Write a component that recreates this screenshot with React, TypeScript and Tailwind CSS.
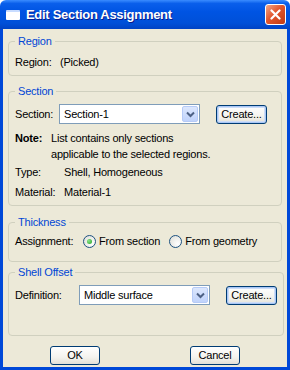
import React from "react";

const font = { fontFamily: '"Liberation Sans", Arial, sans-serif' };

function XpButton({ label, w, focus }: { label: string; w: number; focus?: boolean }) {
  return (
    <div
      className="h-[19px] rounded-[3px] border border-[#003C74] bg-[linear-gradient(#FFFFFF,#F4F3EE_60%,#E3E1D6)] flex items-center justify-center text-[11px] text-black"
      style={{ width: w, boxShadow: focus ? "inset 0 0 0 1px #A9C7F5, inset 0 0 0 2px #CEDDF7" : undefined }}
    >
      {label}
    </div>
  );
}

function Combo({ value, w }: { value: string; w: number }) {
  return (
    <div className="h-[20px] border border-[#7F9DB9] bg-white flex items-stretch" style={{ width: w }}>
      <div className="flex-1 flex items-center pl-[4px] text-[11px] text-black">{value}</div>
      <div className="m-[1px] w-[16px] rounded-[2px] border border-[#B6CBF7] bg-[linear-gradient(#DCE7FD,#C0D3FB)] flex items-center justify-center">
        <svg width="9" height="7" viewBox="0 0 9 7">
          <path d="M1 1.5 L4.5 5 L8 1.5" stroke="#4D6185" strokeWidth="2" fill="none" />
        </svg>
      </div>
    </div>
  );
}

function Radio({ checked }: { checked?: boolean }) {
  return (
    <div className="w-[13px] h-[13px] rounded-full border border-[#1C5180] bg-[radial-gradient(circle_at_70%_70%,#FFFFFF,#DCDCD4)] flex items-center justify-center">
      {checked && <div className="w-[5px] h-[5px] rounded-full bg-[radial-gradient(circle_at_35%_35%,#8BE58B,#21A121)]" />}
    </div>
  );
}

function Group({ title, children, cls }: { title: string; children: React.ReactNode; cls: string }) {
  return (
    <fieldset className={"mx-[5px] border border-[#D0D0BF] rounded-[4px] px-[6px] " + cls}>
      <legend className="px-[3px] text-[11px] text-[#0046D5] leading-[12px]">{title}</legend>
      {children}
    </fieldset>
  );
}

export default function App() {
  return (
    <div className="w-[290px] h-[370px] flex flex-col overflow-hidden" style={font}>
      <div className="h-[29px] bg-[linear-gradient(#3A8CFF_0%,#0A5FEB_12%,#0054E3_40%,#0050D8_80%,#0043C4_100%)] flex items-center pl-[6px] pr-[4px] rounded-t-[6px]">
        <div className="w-[14px] h-[10px] bg-white rounded-[1px] border-t-[2px] border-[#C8DCFF] mr-[6px] mt-[1px]" />
        <div className="text-white font-bold text-[13px] tracking-[-0.3px] flex-1 [text-shadow:1px_1px_#0A1E8C]">Edit Section Assignment</div>
        <div className="w-[21px] h-[21px] rounded-[3px] border border-white bg-[linear-gradient(135deg,#F0A88A,#E2562D_45%,#C03A12)] flex items-center justify-center">
          <svg width="11" height="11" viewBox="0 0 11 11">
            <path d="M1.5 1.5 L9.5 9.5 M9.5 1.5 L1.5 9.5" stroke="white" strokeWidth="2.2" strokeLinecap="round" />
          </svg>
        </div>
      </div>
      <div className="flex-1 bg-[#ECE9D8] border-x-[3px] border-b-[3px] border-[#0048D8] flex flex-col text-[11px] tracking-[-0.2px] text-black">
        <Group title="Region" cls="mt-[6px] pt-[8px] pb-[6px]">
          <div className="flex h-[14px] items-center">
            <span className="w-[45px]">Region:</span>
            <span>(Picked)</span>
          </div>
        </Group>
        <Group title="Section" cls="mt-[9px] pt-[7px] pb-[4px]">
          <div className="flex items-center">
            <span className="w-[44px]">Section:</span>
            <Combo value="Section-1" w={141} />
            <div className="ml-[16px]">
              <XpButton label="Create..." w={51} focus />
            </div>
          </div>
          <div className="flex mt-[6px] leading-[16px]">
            <span className="w-[36px] font-bold">Note:</span>
            <span>
              List contains only sections
              <br />
              applicable to the selected regions.
            </span>
          </div>
          <div className="flex mt-[1px] h-[18px] items-center">
            <span className="w-[49px]">Type:</span>
            <span>Shell, Homogeneous</span>
          </div>
          <div className="flex mt-[2px] h-[18px] items-center">
            <span className="w-[49px]">Material:</span>
            <span>Material-1</span>
          </div>
        </Group>
        <Group title="Thickness" cls="mt-[10px] pt-[5px] pb-[12px]">
          <div className="flex items-center h-[16px]">
            <span className="w-[68px]">Assignment:</span>
            <Radio checked />
            <span className="ml-[3px]">From section</span>
            <div className="ml-[9px]">
              <Radio />
            </div>
            <span className="ml-[3px]">From geometry</span>
          </div>
        </Group>
        <Group title="Shell Offset" cls="mt-[4px] pt-[7px] pb-[30px]">
          <div className="flex items-center">
            <span className="w-[64px]">Definition:</span>
            <Combo value="Middle surface" w={131} />
            <div className="ml-[16px]">
              <XpButton label="Create..." w={51} focus />
            </div>
          </div>
        </Group>
        <div className="flex mt-[10px] pl-[47px]">
          <XpButton label="OK" w={50} />
          <div className="ml-[90px]">
            <XpButton label="Cancel" w={50} />
          </div>
        </div>
      </div>
    </div>
  );
}
